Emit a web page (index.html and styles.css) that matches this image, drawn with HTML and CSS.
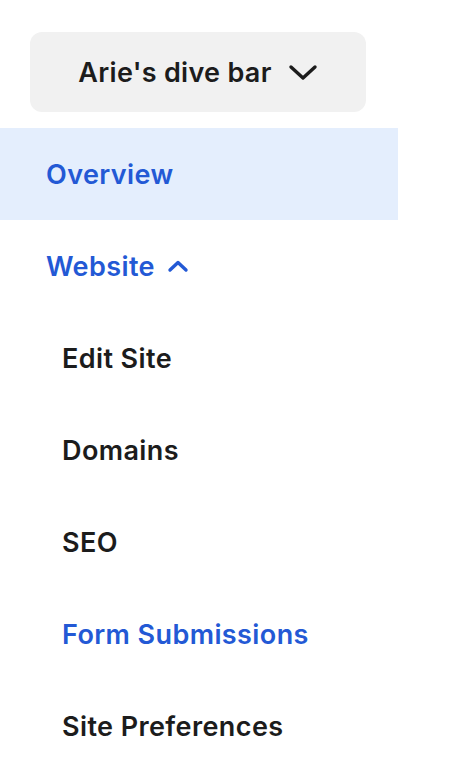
FILE: index.html
```html
<!DOCTYPE html>
<html>
<head>
<meta charset="utf-8">
<link rel="stylesheet" href="styles.css">
</head>
<body>
<nav class="sidebar">
  <div class="switcher-wrap">
    <button class="switcher">
      <span>Arie's dive bar</span>
      <svg class="chev" width="30" height="18" viewBox="0 0 30 18"><path d="M3 4 L15 15 L27 4" fill="none" stroke="#1c1c1c" stroke-width="3.4" stroke-linecap="round" stroke-linejoin="round"/></svg>
    </button>
  </div>
  <ul class="menu">
    <li class="item active">Overview</li>
    <li class="item open">Website
      <svg class="up" width="22" height="14" viewBox="0 0 22 14"><path d="M3 11 L11 3.5 L19 11" fill="none" stroke="#2359d5" stroke-width="3.4" stroke-linecap="round" stroke-linejoin="round"/></svg>
    </li>
    <li class="item sub">Edit Site</li>
    <li class="item sub">Domains</li>
    <li class="item sub">SEO</li>
    <li class="item sub current">Form Submissions</li>
    <li class="item sub">Site Preferences</li>
  </ul>
</nav>
</body>
</html>
```
FILE: styles.css
```css
* { box-sizing: border-box; }
body {
  margin: 0;
  background: #fff;
  font-family: Inter, "Noto Sans", sans-serif;
  color: #1c1c1c;
}
.sidebar { width: 398px; padding-top: 32px; }
.switcher-wrap { padding: 0 32px 0 30px; margin-bottom: 16px; }
.switcher {
  width: 336px;
  height: 80px;
  border: none;
  border-radius: 12px;
  background: #f1f1f1;
  display: flex;
  align-items: center;
  justify-content: center;
  gap: 16px;
  font-family: inherit;
  font-size: 27px;
  letter-spacing: 0.3px;
  font-weight: 600;
  color: #1c1c1c;
  padding: 0;
}
.menu { list-style: none; margin: 0; padding: 0; }
.item {
  height: 92px;
  display: flex;
  align-items: center;
  padding-left: 46px;
  font-size: 27px;
  letter-spacing: 0.4px;
  font-weight: 600;
  color: #1c1c1c;
}
.item.active { background: #e4eefd; color: #2359d5; }
.item.open { color: #2359d5; gap: 12px; }
.item.sub { padding-left: 62px; }
.item.current { color: #2359d5; }
```
